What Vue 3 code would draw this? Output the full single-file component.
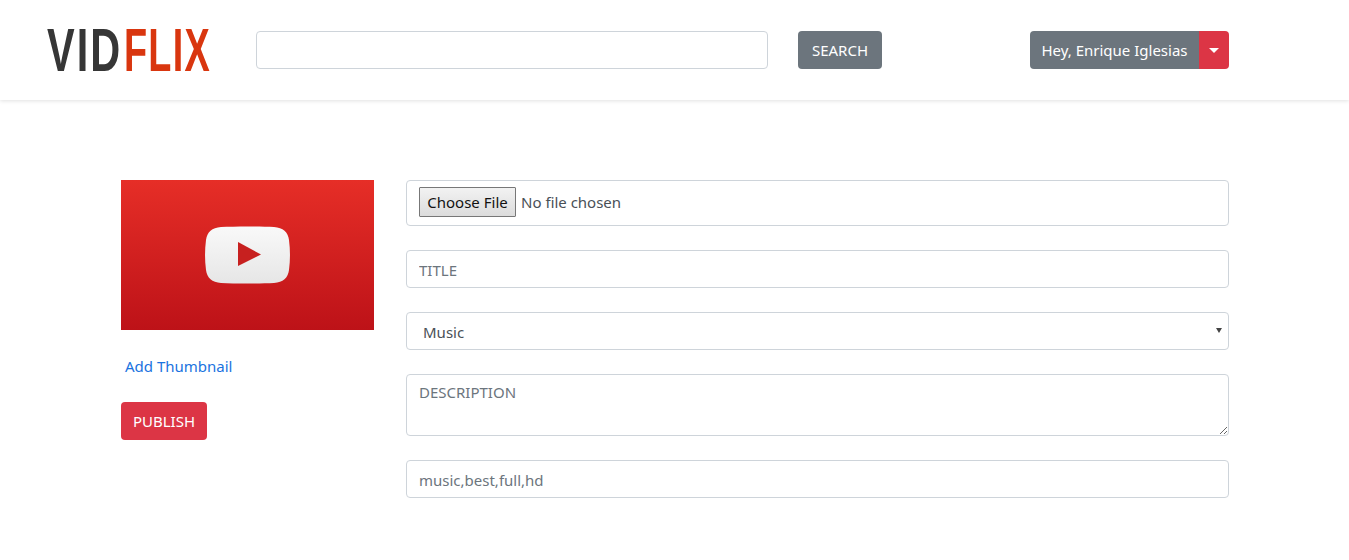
<script setup>
import { ref } from 'vue';

const category = ref('Music');
const categories = ['Music', 'Sports', 'Gaming', 'News', 'Movies'];
</script>

<template>
  <div class="page">
    <header class="topbar">
      <div class="logo">
        <span class="logo-part"><span class="vid">VID</span></span>
        <span class="logo-part flix-part"><span class="flix">FLIX</span></span>
      </div>
      <input type="text" class="search-input">
      <button class="btn btn-grey search-btn">SEARCH</button>
      <div class="user-menu">
        <button class="btn btn-grey user-name">Hey, Enrique Iglesias</button>
        <button class="btn btn-red user-caret"><span class="caret"></span></button>
      </div>
    </header>

    <main class="upload">
      <section class="side">
        <div class="thumb">
          <svg width="85" height="58" viewBox="0 0 85 58">
            <defs>
              <linearGradient id="playBg" x1="0" y1="0" x2="0" y2="1">
                <stop offset="0" stop-color="#f9f9f9" />
                <stop offset="1" stop-color="#e6e6e6" />
              </linearGradient>
            </defs>
            <path d="M16 1C30 .2 55 .2 69 1C78 1.6 83 6 84 14C85.3 24 85.3 34 84 44C83 52 78 56.4 69 57C55 57.8 30 57.8 16 57C7 56.4 2 52 1 44C-.3 34 -.3 24 1 14C2 6 7 1.6 16 1Z" fill="url(#playBg)" />
            <path d="M33 16L56 28.500L33 40Z" fill="#c7201f" />
          </svg>
        </div>
        <a href="#" class="thumb-link">Add Thumbnail</a>
        <button class="btn btn-red publish">PUBLISH</button>
      </section>

      <form class="fields" @submit.prevent>
        <div class="file-box"><input type="file" class="file-input"></div>
        <input type="text" class="control" placeholder="TITLE">
        <div class="select-wrap">
          <select v-model="category" class="control select">
            <option v-for="c in categories" :key="c" :value="c">{{ c }}</option>
          </select>
        </div>
        <textarea class="control area" placeholder="DESCRIPTION"></textarea>
        <input type="text" class="control" placeholder="music,best,full,hd">
      </form>
    </main>
  </div>
</template>

<style>
html, body {
  margin: 0;
  background: #fff;
}
</style>

<style scoped>
.page {
  height: 560px;
  overflow: hidden;
  font-family: "Noto Sans", "Open Sans", sans-serif;
  font-size: 15px;
  color: #495057;
}

.topbar {
  height: 100px;
  box-sizing: border-box;
  padding-left: 47px;
  display: flex;
  align-items: center;
  box-shadow: 0 1px 4px rgba(0, 0, 0, 0.12);
}

.logo {
  width: 163px;
  margin-right: 46px;
  display: flex;
  font-family: "Liberation Sans", sans-serif;
  font-weight: 700;
  font-size: 61px;
  line-height: 61px;
  white-space: nowrap;
}

.logo-part {
  width: 77px;
  flex: none;
}

.flix-part {
  width: 86px;
}

.vid,
.flix {
  display: inline-block;
  transform-origin: left center;
  letter-spacing: 3px;
}

.vid {
  color: #363636;
  transform: scaleX(0.68);
}

.flix {
  color: #d9360f;
  letter-spacing: 2px;
  transform: scaleX(0.62);
}

.search-input {
  width: 512px;
  height: 38px;
  box-sizing: border-box;
  border: 1px solid #ced4da;
  border-radius: 4px;
  margin-right: 30px;
}

.btn {
  height: 38px;
  border: none;
  padding: 0 13px;
  font-family: inherit;
  font-size: 15px;
  color: #fff;
  border-radius: 4px;
}

.btn-grey {
  background: #6c757d;
}

.btn-red {
  background: #dc3545;
}

.search-btn {
  width: 84px;
  padding: 0;
  margin-right: 148px;
}

.user-menu {
  display: flex;
  width: 199px;
}

.user-name {
  width: 169px;
  padding: 0;
  border-radius: 4px 0 0 4px;
}

.user-caret {
  width: 30px;
  padding: 0;
  border-radius: 0 4px 4px 0;
  display: flex;
  align-items: center;
  justify-content: center;
}

.caret {
  border-top: 5px solid #fff;
  border-left: 5px solid transparent;
  border-right: 5px solid transparent;
}

.upload {
  margin: 80px 120px 0 121px;
  display: flex;
  gap: 32px;
}

.side {
  width: 253px;
  flex: none;
  display: flex;
  flex-direction: column;
  align-items: flex-start;
}

.thumb {
  width: 253px;
  height: 150px;
  display: flex;
  align-items: center;
  justify-content: center;
  background: linear-gradient(#e62e27, #bd1218);
}

.thumb-link {
  margin: 25px 0 25px 4px;
  line-height: 22px;
  color: #1a73e0;
  text-decoration: none;
}

.publish {
  width: 86px;
  padding: 0;
}

.fields {
  flex: 1;
  display: flex;
  flex-direction: column;
  gap: 24px;
}

.file-box {
  height: 46px;
  box-sizing: border-box;
  border: 1px solid #ced4da;
  border-radius: 4px;
  padding: 6px 12px;
}

.file-input {
  font-family: inherit;
  font-size: 15px;
  color: #495057;
}

.file-input::file-selector-button {
  width: 97px;
  height: 30px;
  margin-right: 5px;
  font-family: inherit;
  font-size: 15px;
  color: #111;
  border: 1px solid #777;
  border-radius: 1px;
  background: linear-gradient(#f2f2f2, #dcdcdc);
}

.control {
  display: block;
  width: 100%;
  height: 38px;
  box-sizing: border-box;
  border: 1px solid #ced4da;
  border-radius: 4px;
  padding: 7px 12px 5px;
  font-family: inherit;
  font-size: 15px;
  color: #495057;
  background: #fff;
}

.control::placeholder {
  color: #6c757d;
  opacity: 1;
}

.select-wrap {
  position: relative;
}

/* small native-looking arrow over the select */
.select-wrap::after {
  content: "";
  position: absolute;
  right: 7px;
  top: 16px;
  border-top: 5px solid #444;
  border-left: 3px solid transparent;
  border-right: 3px solid transparent;
  pointer-events: none;
}

.select {
  appearance: none;
  padding-left: 16px;
}

.area {
  height: 62px;
}
</style>
